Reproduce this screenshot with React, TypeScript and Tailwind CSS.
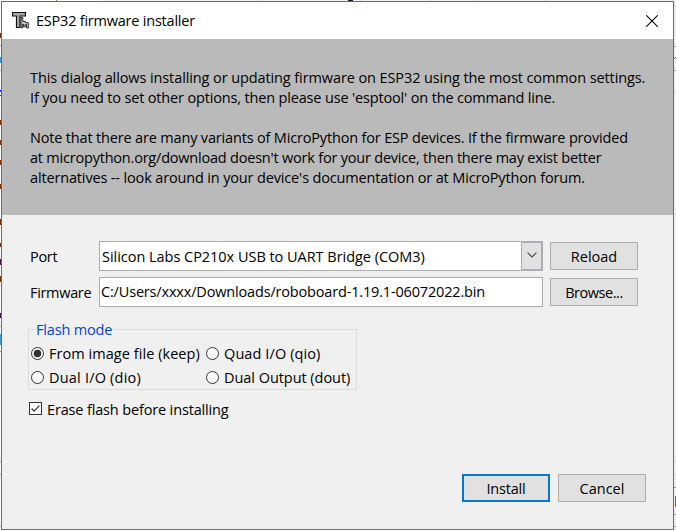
import type { ReactNode } from "react";

function Button({ children, primary = false }: { children: ReactNode; primary?: boolean }) {
  return (
    <button
      className={`flex h-7 w-[88px] shrink-0 items-center justify-center bg-[#e1e1e1] ${
        primary ? "border-2 border-[#0078d7]" : "border border-[#adadad]"
      }`}
    >
      {children}
    </button>
  );
}

function Radio({ checked = false, children }: { checked?: boolean; children: ReactNode }) {
  return (
    <label className="flex h-6 items-center gap-[5px]">
      <svg className="-mt-0.5 size-[13px] shrink-0" viewBox="0 0 13 13">
        <circle cx="6.5" cy="6.5" r="6" fill="white" stroke="#333" strokeWidth="1" />
        {checked && <circle cx="6.5" cy="6.5" r="3.8" fill="#333" />}
      </svg>
      {children}
    </label>
  );
}

/* Slivers of the editor window that show round the dialog. */
function Backdrop() {
  return (
    <svg className="absolute inset-0 h-[530px] w-[676px]" viewBox="0 0 676 530" shapeRendering="crispEdges">
      <rect width="676" height="530" fill="#f0f0f0" />
      <rect width="1" height="530" fill="white" />
      <rect width="102" height="1" fill="white" />
      <path d="M258 0h1M360 0h1M430 0h1M474 0h1M544 0h1" stroke="#d0d0d0" strokeWidth="2" />
      <path d="M56 0h1" stroke="#b06000" strokeWidth="2" />
      <path d="M348 .5h4" stroke="#111" />
      <path d="M352 .5h1" stroke="#00007f" />
      <path d="M.5 33v5M.5 120v5M.5 140v5M.5 160v5M.5 184v5M.5 219v6M.5 243v4M.5 276v6" stroke="#7f3000" />
      <path d="M.5 259v6M.5 313v5" stroke="#50104f" />
      <path d="M.5 57v6M.5 334v11" stroke="#4096e0" />
      <path d="M.5 90v2M.5 95v1" stroke="#1030ff" />
      <path d="M0 45.5h1M0 70.5h1M0 326.5h1M0 351.5h1M0 461.5h1M0 474.5h1M0 526.5h1" stroke="#aaa" />
      <path d="M674 5.5h2M674 91.5h2M674 461.5h2M674 474.5h2" stroke="#d0d0d0" />
      <path d="M674 46h2M674 70h2M674 487.5h2M674 514.5h2M674 526.5h2" stroke="#a0a0a0" />
      <path d="M674 59l2-2" stroke="#555" />
      <path d="M675.5 496v11" stroke="#a05000" />
    </svg>
  );
}

export default function App() {
  return (
    <div className="relative h-[530px] w-[676px] overflow-hidden whitespace-nowrap font-['Open_Sans','Noto_Sans',sans-serif] text-[14.5px] leading-5 text-black">
      <Backdrop />
      <div className="relative mt-px ml-px flex h-[529px] w-[673px] flex-col border border-[#6b6b6b] bg-[#f0f0f0]">
        <header className="flex h-[37px] shrink-0 items-center bg-white pr-[15px] pl-[10px]">
          <svg className="size-[17px] shrink-0" viewBox="0 0 17 17" fill="none">
            <path
              d="M.5 .5h13v3.5H8v11.5H4.5V4H.5z"
              fill="#a8a8a8"
              stroke="#111"
              strokeWidth="1.2"
            />
            <path
              d="M9 5.5h1.8v4h2.6v1.2h2.9v5.2h-1.8v-3.3h-1.3v2.2h-1.6v-2.6h-.9v3.6H9z"
              fill="#d4d4d4"
              stroke="#111"
              strokeWidth=".9"
            />
          </svg>
          <h1 className="ml-[7px] grow tracking-[-0.22px]">ESP32 firmware installer</h1>
          <svg className="size-3 shrink-0" viewBox="0 0 12 12">
            <path d="M.3 .3l11.4 11.4M11.7 .3L.3 11.7" stroke="#000" strokeWidth="1.05" />
          </svg>
        </header>

        <section className="h-[176px] shrink-0 bg-[#bababa] pt-[29px] pl-7">
          <p className="tracking-[-0.1px]">
            This dialog allows installing or updating firmware on ESP32 using the most common settings.
          </p>
          <p className="tracking-[-0.16px]">
            If you need to set other options, then please use 'esptool' on the command line.
          </p>
          <p className="mt-5 tracking-[-0.17px]">
            Note that there are many variants of MicroPython for ESP devices. If the firmware provided
          </p>
          <p className="tracking-[-0.21px]">
            at micropython.org/download doesn't work for your device, then there may exist better
          </p>
          <p className="tracking-[-0.15px]">
            alternatives -- look around in your device's documentation or at MicroPython forum.
          </p>
        </section>

        <main className="flex grow flex-col pt-[26px]">
          <div className="flex h-[30px] items-center pl-7">
            <span className="w-[69px] shrink-0 pt-[2px] tracking-[-0.3px]">Port</span>
            <div className="flex h-[30px] w-[444px] shrink-0 items-stretch border border-[#abadb3] bg-white">
              <span className="grow pt-[5px] pl-[2px] tracking-[-0.03px]">
                Silicon Labs CP210x USB to UART Bridge (COM3)
              </span>
              <span className="flex w-[21px] items-center justify-center border border-[#adadad] bg-[#e1e1e1]">
                <svg className="-mt-0.5 h-[6px] w-[10px]" viewBox="0 0 10 6">
                  <path d="M.6 .7L5 5 9.4 .7" fill="none" stroke="#444" strokeWidth="1.1" />
                </svg>
              </span>
            </div>
            <div className="ml-[7px]">
              <Button>
                <span className="pt-px">Reload</span>
              </Button>
            </div>
          </div>
          <div className="mt-[6px] flex h-[30px] items-center pl-7">
            <span className="w-[69px] shrink-0 pt-[2px] tracking-[-0.32px]">Firmware</span>
            <div className="flex h-[30px] w-[444px] shrink-0 border border-[#abadb3] bg-white pt-1 pl-px">
              <span className="tracking-[-0.17px]">C:/Users/xxxx/Downloads/roboboard-1.19.1-06072022.bin</span>
            </div>
            <div className="ml-[7px]">
              <Button>
                <span className="pt-px tracking-[-0.45px]">Browse...</span>
              </Button>
            </div>
          </div>

          <fieldset className="mt-3 ml-[26px] h-[71px] w-[329px] border border-[#dcdcdc] pl-[2px]">
            <legend className="ml-[5px] h-5 pt-px tracking-[-0.17px] text-[#0046d5]">Flash mode</legend>
            <div className="grid grid-cols-[175px_1fr] pt-[3px]">
              <Radio checked>
                <span className="tracking-[0.05px]">From image file (keep)</span>
              </Radio>
              <Radio>
                <span className="tracking-[0.1px]">Quad I/O (qio)</span>
              </Radio>
              <Radio>
                <span className="tracking-[0.2px]">Dual I/O (dio)</span>
              </Radio>
              <Radio>
                <span className="tracking-[-0.05px]">Dual Output (dout)</span>
              </Radio>
            </div>
          </fieldset>

          <label className="mt-[9px] ml-[27px] flex h-5 items-center gap-[5px]">
            <svg className="-mt-px size-[13px]" viewBox="0 0 13 13">
              <rect x=".5" y=".5" width="12" height="12" fill="white" stroke="#333" />
              <path d="M2.6 6.5l2.5 2.6 5.3-5.5" fill="none" stroke="#333" strokeWidth="1.2" />
            </svg>
            <span className="pt-px tracking-[-0.15px]">Erase flash before installing</span>
          </label>

          <div className="mt-auto mr-[27px] mb-[27px] flex justify-end gap-2">
            <Button primary>
              <span className="pt-px tracking-[-0.2px]">Install</span>
            </Button>
            <Button>
              <span className="pt-px">Cancel</span>
            </Button>
          </div>
        </main>
      </div>
    </div>
  );
}
